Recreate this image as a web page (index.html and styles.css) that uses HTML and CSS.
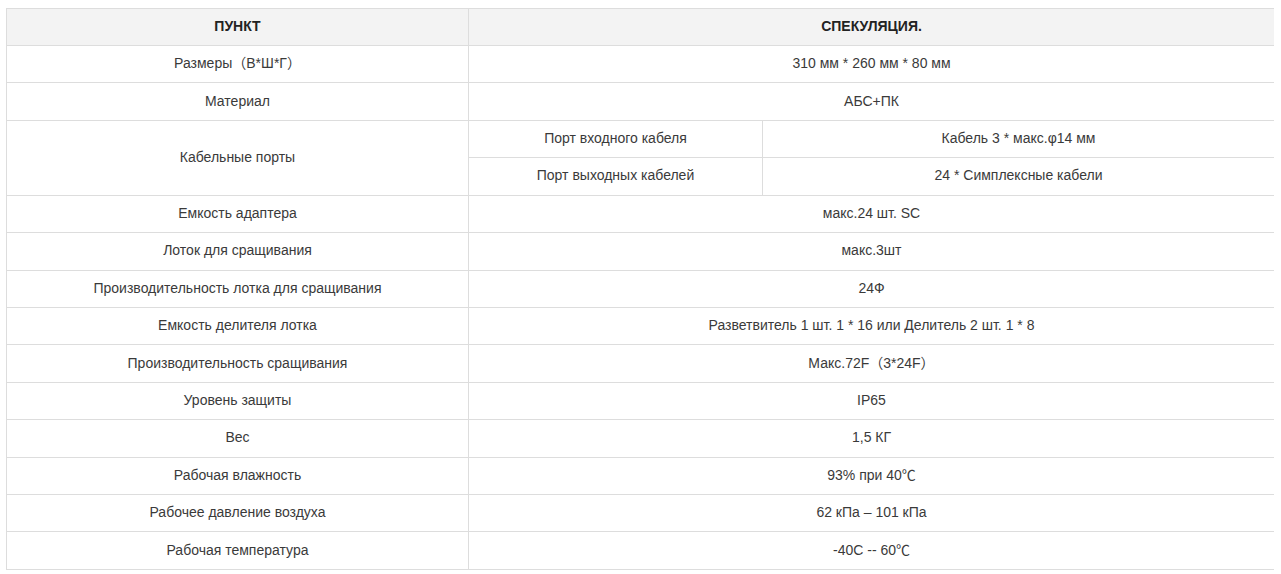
FILE: index.html
```html
<!DOCTYPE html>
<html lang="ru">
<head>
<meta charset="utf-8">
<title>Спецификация</title>
<link rel="stylesheet" href="styles.css">
</head>
<body>
<table class="spec">
  <colgroup>
    <col class="c1">
    <col class="c2">
    <col class="c3">
  </colgroup>
  <thead>
    <tr><th>ПУНКТ</th><th colspan="2">СПЕКУЛЯЦИЯ.</th></tr>
  </thead>
  <tbody>
    <tr><td>Размеры（В*Ш*Г）</td><td colspan="2">310 мм * 260 мм * 80 мм</td></tr>
    <tr><td>Материал</td><td colspan="2">АБС+ПК</td></tr>
    <tr><td rowspan="2">Кабельные порты</td><td>Порт входного кабеля</td><td>Кабель 3 * макс.φ14 мм</td></tr>
    <tr><td>Порт выходных кабелей</td><td>24 * Симплексные кабели</td></tr>
    <tr><td>Емкость адаптера</td><td colspan="2">макс.24 шт. SC</td></tr>
    <tr><td>Лоток для сращивания</td><td colspan="2">макс.3шт</td></tr>
    <tr><td>Производительность лотка для сращивания</td><td colspan="2">24Ф</td></tr>
    <tr><td>Емкость делителя лотка</td><td colspan="2">Разветвитель 1 шт. 1 * 16 или Делитель 2 шт. 1 * 8</td></tr>
    <tr><td>Производительность сращивания</td><td colspan="2">Макс.72F（3*24F）</td></tr>
    <tr><td>Уровень защиты</td><td colspan="2">IP65</td></tr>
    <tr><td>Вес</td><td colspan="2">1,5 КГ</td></tr>
    <tr><td>Рабочая влажность</td><td colspan="2">93% при 40℃</td></tr>
    <tr><td>Рабочее давление воздуха</td><td colspan="2">62 кПа – 101 кПа</td></tr>
    <tr><td>Рабочая температура</td><td colspan="2">-40C -- 60℃</td></tr>
  </tbody>
</table>
</body>
</html>
```
FILE: styles.css
```css
html, body {
  background: #ffffff;
}
body {
  margin: 8px 7px 0 6px;
  font-family: "Liberation Sans", Arial, "Noto Sans CJK SC", sans-serif;
  font-size: 14px;
  color: #3a3a3a;
}
.spec {
  width: 1268px;
  border-collapse: collapse;
  table-layout: fixed;
}
.spec .c1 { width: 462px; }
.spec .c2 { width: 294px; }
.spec .c3 { width: 512px; }
.spec th,
.spec td {
  border: 1px solid #dddddd;
  text-align: center;
  vertical-align: middle;
  padding: 0 8px 2px;
  line-height: 20px;
}
.spec th {
  height: 34px;
  background: #f3f3f3;
  font-weight: bold;
  color: #222222;
}
.spec tbody tr {
  height: 37.43px;
}
```
